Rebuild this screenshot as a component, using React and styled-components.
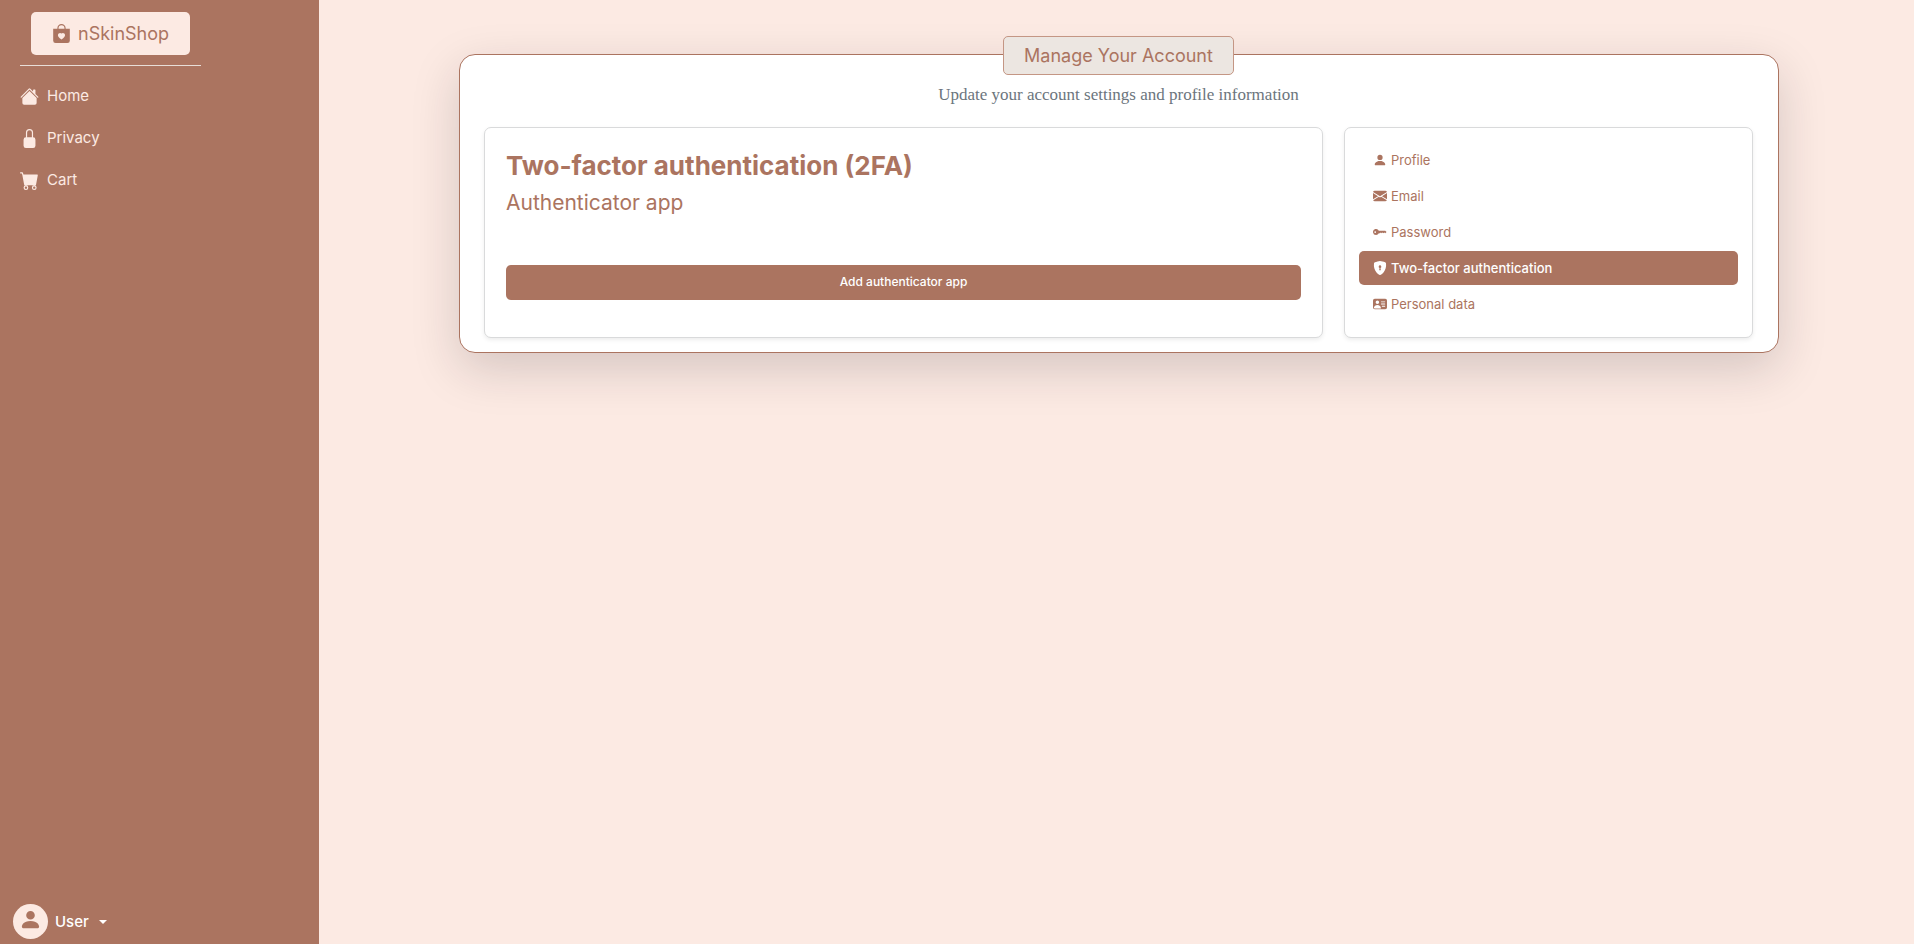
import React from "react";
import styled, { createGlobalStyle } from "styled-components";
import {
  BsBagHeartFill,
  BsHouseFill,
  BsLockFill,
  BsCartFill,
  BsPersonFill,
  BsEnvelopeFill,
  BsKeyFill,
  BsShieldLockFill,
  BsPersonVcardFill,
} from "react-icons/bs";

const clay = "#ab7460";
const cream = "#fceae3";

const GlobalStyle = createGlobalStyle`
  *, *::before, *::after { box-sizing: border-box; }
  body {
    margin: 0;
    background: ${cream};
    color: ${clay};
    font-family: Inter, "Liberation Sans", sans-serif;
    font-size: 16px;
    line-height: 24px;
  }
  h1, h2, h3, p, ul { margin: 0; padding: 0; }
  ul { list-style: none; }
  a { color: inherit; text-decoration: none; }
  button { font: inherit; border: 0; cursor: pointer; }
  svg { display: block; flex: none; }
`;

const Page = styled.div`
  display: flex;
  min-height: 100vh;
`;

const Sidebar = styled.aside`
  display: flex;
  flex-direction: column;
  flex: none;
  width: 16.6667%;
  padding: 12px 13px 5px;
  background: ${clay};
  color: ${cream};
`;

const Brand = styled.a`
  display: flex;
  align-items: center;
  align-self: flex-start;
  gap: 7px;
  height: 43px;
  margin-left: 18px;
  padding: 0 21px;
  border-radius: 5px;
  background: ${cream};
  && { color: ${clay}; }
  font-size: 18px;
`;

const Divider = styled.hr`
  width: 181px;
  margin: 10px 7px 9px;
  border: 0;
  border-top: 1px solid #e8ded8;
`;

const SideNav = styled.ul`
  display: flex;
  flex-direction: column;
  flex: 1;
  padding: 0 7px;
`;

const SideLink = styled.a`
  display: flex;
  align-items: center;
  gap: 8px;
  height: 42px;
  font-size: 15px;
`;

const UserButton = styled.button`
  display: flex;
  align-items: center;
  align-self: flex-start;
  padding: 0;
  background: none;
  color: #fff;
  font-size: 15px;
  font-weight: 500;
`;

const Avatar = styled.span`
  display: flex;
  align-items: center;
  justify-content: center;
  width: 35px;
  height: 35px;
  margin-right: 7px;
  padding-bottom: 4px;
  border-radius: 50%;
  background: ${cream};
  color: ${clay};
`;

const Caret = styled.span`
  margin-left: 10px;
  border: 4px solid transparent;
  border-top-color: #fff;
  border-bottom: 0;
`;

const Main = styled.main`
  flex: 1;
  min-width: 0;
  padding: 54px 24px 24px 29px;
`;

const Card = styled.section`
  display: flex;
  flex-direction: column;
  align-items: center;
  max-width: 1320px;
  margin: 0 auto;
  padding: 0 25px 14px 24px;
  border: 1px solid ${clay};
  border-radius: 16px;
  background: #fff;
  box-shadow: 0 16px 48px rgba(33, 30, 41, 0.175);
`;

const Title = styled.h1`
  margin-top: -19px;
  padding: 5px 20px 4px;
  border: 1px solid #c49684;
  border-radius: 5px;
  background: #ece6e1;
  font-size: 18px;
  font-weight: 400;
  line-height: 28px;
`;

const Subtitle = styled.p`
  margin: 8px 0 20px;
  color: #6c757d;
  font-family: "Liberation Serif", serif;
  font-size: 17px;
`;

const Columns = styled.div`
  display: flex;
  gap: 21px;
  width: 100%;
`;

const Panel = styled.div`
  border: 1px solid #d9dadb;
  border-radius: 7px;
  background: #fff;
  box-shadow: 0 2px 4px rgba(0, 0, 0, 0.075);
`;

const ContentPanel = styled(Panel)`
  flex: none;
  width: calc((100% + 21px) * 2 / 3 - 21px);
  padding: 21px;
`;

const MenuPanel = styled(Panel)`
  flex: 1;
  min-width: 0;
  padding: 15px 14px 16px;
`;

const Heading = styled.h2`
  font-size: 26px;
  font-weight: 700;
  line-height: 34px;
`;

const SubHeading = styled.h3`
  margin: 4px 0 46px;
  font-size: 21px;
  font-weight: 400;
  line-height: 32px;
`;

const PrimaryButton = styled.button`
  width: 100%;
  height: 35px;
  padding: 0 0 2px;
  border-radius: 5px;
  background: ${clay};
  color: #fff;
  font-size: 12px;
  font-weight: 500;
`;

const Menu = styled.ul`
  display: flex;
  flex-direction: column;
  gap: 2px;
`;

const MenuLink = styled.a`
  display: flex;
  align-items: center;
  gap: 4px;
  height: 34px;
  padding: 0 14px;
  border-radius: 5px;
  background: ${(p) => (p.$active ? clay : "transparent")};
  && { color: ${(p) => (p.$active ? "#fff" : clay)}; }
  font-size: 13px;
  font-weight: ${(p) => (p.$active ? 500 : 400)};
`;

const sideItems = [
  { label: "Home", Icon: BsHouseFill },
  { label: "Privacy", Icon: BsLockFill },
  { label: "Cart", Icon: BsCartFill },
];

const menuItems = [
  { label: "Profile", Icon: BsPersonFill },
  { label: "Email", Icon: BsEnvelopeFill },
  { label: "Password", Icon: BsKeyFill },
  { label: "Two-factor authentication", Icon: BsShieldLockFill, active: true },
  { label: "Personal data", Icon: BsPersonVcardFill },
];

export default function App() {
  return (
    <Page>
      <GlobalStyle />
      <Sidebar>
        <Brand href="#">
          <BsBagHeartFill size={19} />
          nSkinShop
        </Brand>
        <Divider />
        <SideNav>
          {sideItems.map(({ label, Icon }) => (
            <li key={label}>
              <SideLink href="#">
                <Icon size={19} />
                {label}
              </SideLink>
            </li>
          ))}
        </SideNav>
        <UserButton type="button" aria-haspopup="menu">
          <Avatar>
            <BsPersonFill size={23} />
          </Avatar>
          User
          <Caret />
        </UserButton>
      </Sidebar>
      <Main>
        <Card>
          <Title>Manage Your Account</Title>
          <Subtitle>Update your account settings and profile information</Subtitle>
          <Columns>
            <ContentPanel>
              <Heading>Two-factor authentication (2FA)</Heading>
              <SubHeading>Authenticator app</SubHeading>
              <PrimaryButton type="button">Add authenticator app</PrimaryButton>
            </ContentPanel>
            <MenuPanel as="nav">
              <Menu>
                {menuItems.map(({ label, Icon, active }) => (
                  <li key={label}>
                    <MenuLink href="#" $active={active} aria-current={active ? "page" : undefined}>
                      <Icon size={14} />
                      {label}
                    </MenuLink>
                  </li>
                ))}
              </Menu>
            </MenuPanel>
          </Columns>
        </Card>
      </Main>
    </Page>
  );
}
